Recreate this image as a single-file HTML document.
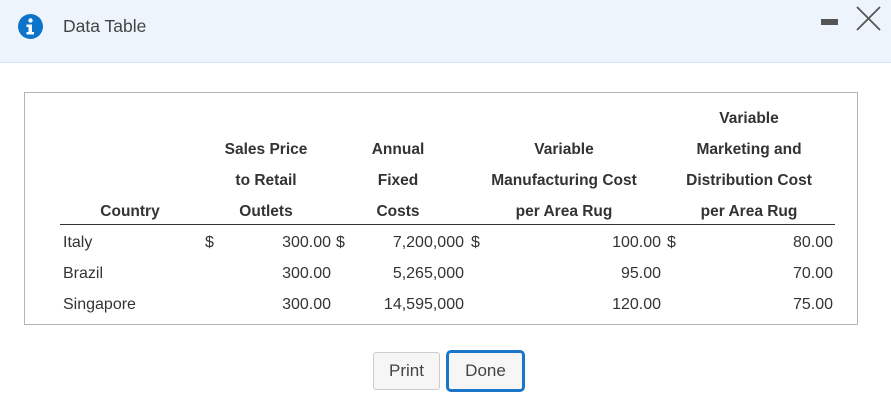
<!DOCTYPE html>
<html><head><style>
body{margin:0;width:891px;height:406px;background:#fff;font-family:"Liberation Sans",sans-serif;position:relative;overflow:hidden;color:#333}
.hdr{position:absolute;left:0;top:0;width:891px;height:62px;background:#eef4fc;border-bottom:1px solid #d3e3f5}
.t{position:absolute;font-size:16px;white-space:nowrap;line-height:18px}
.b{font-weight:bold;font-size:15.5px;transform:translateX(-50%)}
.r{transform:translateX(-100%)}
.box{position:absolute;left:24px;top:92px;width:832px;height:231px;border:1px solid #b5b5b5}
.btn{position:absolute;font-size:17px;color:#444;background:#f6f6f6;text-align:center;box-sizing:border-box}
</style></head><body>
<div class="hdr"></div>
<svg style="position:absolute;left:18px;top:14px" width="25" height="25" viewBox="0 0 25 25"><circle cx="12.5" cy="12.5" r="12.5" fill="#0d74c9"/><circle cx="12.5" cy="6.5" r="2.2" fill="#fff"/><path d="M8.5 10.5h5.5v7.5h2v2.5h-7.5v-2.5h2v-5h-2z" fill="#fff"/></svg>
<div class="t" style="left:63px;top:16px;font-size:17.5px;color:#444;line-height:20px">Data Table</div>
<div style="position:absolute;left:821px;top:19px;width:17px;height:6px;background:#555"></div>
<svg style="position:absolute;left:856px;top:6px" width="25" height="25" viewBox="0 0 25 25"><path d="M1 1L24 24M24 1L1 24" stroke="#555" stroke-width="1.8"/></svg>
<div class="box"></div>
<div class="t b" style="left:749px;top:110px">Variable</div>
<div class="t b" style="left:266px;top:141px">Sales Price</div>
<div class="t b" style="left:398px;top:141px">Annual</div>
<div class="t b" style="left:564px;top:141px">Variable</div>
<div class="t b" style="left:749px;top:141px">Marketing and</div>
<div class="t b" style="left:266px;top:172px">to Retail</div>
<div class="t b" style="left:398px;top:172px">Fixed</div>
<div class="t b" style="left:564px;top:172px">Manufacturing Cost</div>
<div class="t b" style="left:749px;top:172px">Distribution Cost</div>
<div class="t b" style="left:130px;top:203px">Country</div>
<div class="t b" style="left:266px;top:203px">Outlets</div>
<div class="t b" style="left:398px;top:203px">Costs</div>
<div class="t b" style="left:564px;top:203px">per Area Rug</div>
<div class="t b" style="left:749px;top:203px">per Area Rug</div>
<div style="position:absolute;left:60px;top:224px;width:775px;height:1px;background:#333"></div>

<div class="t" style="left:63px;top:234px">Italy</div>
<div class="t" style="left:205px;top:234px">$</div>
<div class="t r" style="left:331px;top:234px">300.00</div>
<div class="t" style="left:336px;top:234px">$</div>
<div class="t r" style="left:464px;top:234px">7,200,000</div>
<div class="t" style="left:471px;top:234px">$</div>
<div class="t r" style="left:661px;top:234px">100.00</div>
<div class="t" style="left:667px;top:234px">$</div>
<div class="t r" style="left:833px;top:234px">80.00</div>

<div class="t" style="left:63px;top:265px">Brazil</div>
<div class="t r" style="left:331px;top:265px">300.00</div>
<div class="t r" style="left:464px;top:265px">5,265,000</div>
<div class="t r" style="left:661px;top:265px">95.00</div>
<div class="t r" style="left:833px;top:265px">70.00</div>

<div class="t" style="left:63px;top:296px">Singapore</div>
<div class="t r" style="left:331px;top:296px">300.00</div>
<div class="t r" style="left:464px;top:296px">14,595,000</div>
<div class="t r" style="left:661px;top:296px">120.00</div>
<div class="t r" style="left:833px;top:296px">75.00</div>

<div class="btn" style="left:373px;top:352px;width:67px;height:38px;border:1px solid #ccc;border-radius:3px;line-height:36px">Print</div>
<div class="btn" style="left:446px;top:350px;width:79px;height:42px;border:3px solid #1a76c8;border-radius:5px;line-height:36px">Done</div>
</body></html>
